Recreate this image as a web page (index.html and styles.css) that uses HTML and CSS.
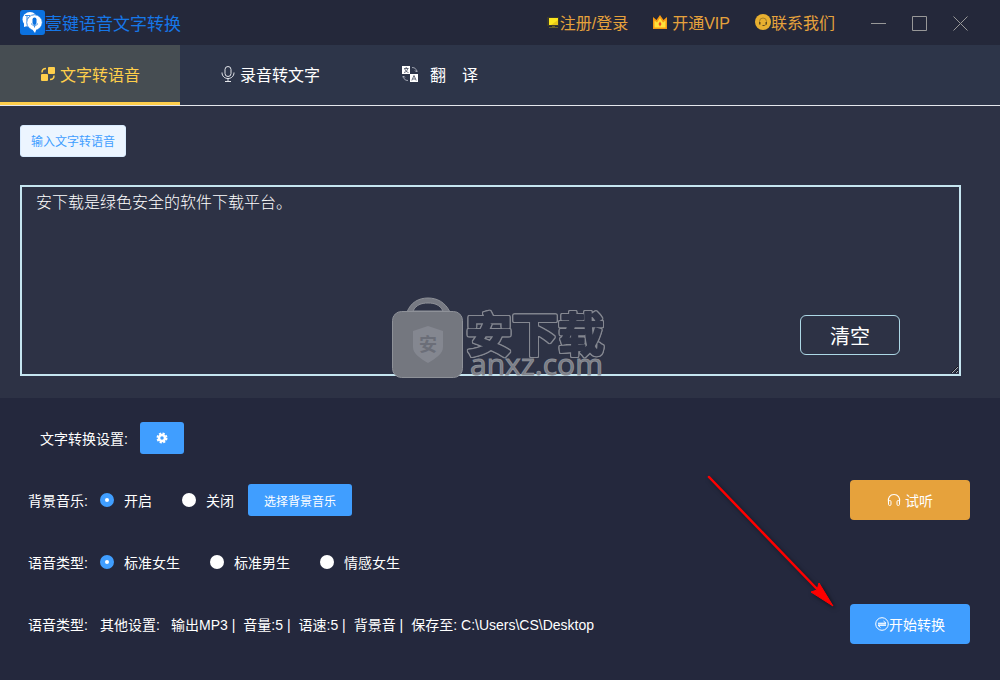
FILE: index.html
```
<!DOCTYPE html>
<html lang="zh-CN">
<head>
    <meta charset="UTF-8">
    <meta name="viewport" content="width=device-width, initial-scale=1.0">
    <title>壹键语音文字转换</title>
    <link rel="stylesheet" href="styles.css">
</head>
<body>
    <header class="header">
        <div class="logo">
            <svg width="25" height="25" viewBox="0 0 25 25">
                <rect width="25" height="25" rx="3" fill="#0b72e0"/>
                <circle cx="10" cy="9.500" r="7.500" fill="#fff"/>
                <path d="M4 13v4l5-1.500z" fill="#fff"/>
                <path d="M5 5.500h5M7 5.500v5" fill="none" stroke="#0b72e0" stroke-width=".8"/>
                <circle cx="14.500" cy="12.500" r="7.800" fill="#fff" stroke="#0b72e0" stroke-width=".8"/>
                <path d="M12 19l3 4 1.500-4z" fill="#fff"/>
                <rect x="12.500" y="7.500" width="4" height="7.500" rx="2" fill="#0b72e0"/>
                <path d="M11.500 13.500c.5 3 5.500 3 6 0M14.500 15.500v2" fill="none" stroke="#0b72e0" stroke-width=".8"/>
            </svg>
            <span>壹键语音文字转换</span>
        </div>
        <div class="header-links">
            <a href="#login">
                <svg width="14" height="14" viewBox="0 0 14 14">
                    <path d="M1 2h12v9H1z" fill="#3b392b"/>
                    <path d="M3 3h9v7H3z" fill="#fbe61e"/>
                    <path d="M12 5v5H5z" fill="#e6c619"/>
                    <path d="M6 11h3v1H6zM3 12h9v1H3z" fill="#66602c"/>
                </svg>
                <span>注册/登录</span>
            </a>
            <a href="#vip" class="vip">
                <svg width="14" height="14" viewBox="0 0 14 14">
                    <path d="M0 2l3.500 3L7 0l3.500 5L14 2v12H0z" fill="#f79a12"/>
                    <path d="M1.500 5.500l2.500 2L7 3l3 4.500 2.500-2v7h-11z" fill="#ffe13c"/>
                    <path d="M7 6.500L8.500 9 7 11.500 5.500 9z" fill="#ef4b1f"/>
                </svg>
                <span>开通VIP</span>
            </a>
            <a href="#contact">
                <svg width="16" height="16" viewBox="0 0 16 16">
                    <circle cx="8" cy="8" r="8" fill="#e8b030"/>
                    <path d="M4.500 9V7.500a3.500 3.500 0 0 1 7 0V9c0 1.500-1 2.500-3 2.500" fill="none" stroke="#8a6a22" stroke-width=".7"/>
                    <path d="M4 8h1.500v2.500H4zM10.500 8H12v2.500h-1.500zM7.500 11h2v1h-2z" fill="#5f4a1f"/>
                </svg>
                <span>联系我们</span>
            </a>
        </div>
        <div class="window-buttons">
            <button type="button" aria-label="最小化">
                <svg width="15" height="15" viewBox="0 0 15 15"><path d="M0 7.500h15"/></svg>
            </button>
            <button type="button" aria-label="最大化">
                <svg width="15" height="15" viewBox="0 0 15 15"><path d="M.5.5h14v14H.5z"/></svg>
            </button>
            <button type="button" aria-label="关闭">
                <svg width="15" height="15" viewBox="0 0 15 15"><path d="M.5.500l14 14M14.500.5l-14 14"/></svg>
            </button>
        </div>
    </header>

    <nav class="tabs">
        <a href="#tts" class="tab active">
            <svg width="16" height="16" viewBox="0 0 16 16" fill="#ffcf4b">
                <rect x="8" y="1" width="7" height="7" rx="1"/>
                <rect x="1" y="8" width="7" height="7" rx="1"/>
                <path d="M2 6.500C2 4 3 2.500 6 2.500M14 9.500c0 2.500-1 4-4 4" fill="none" stroke="#ffcf4b" stroke-width="1.500"/>
            </svg>
            <span>文字转语音</span>
        </a>
        <a href="#record" class="tab">
            <svg width="16" height="16" viewBox="0 0 16 16" fill="none" stroke="#e3e5ea">
                <rect x="5" y=".5" width="6" height="10" rx="3"/>
                <path d="M2 6.500c0 8 12 8 12 0M8 12.500v3M5 15.500h6"/>
            </svg>
            <span>录音转文字</span>
        </a>
        <a href="#translate" class="tab tab-translate">
            <svg width="16" height="16" viewBox="0 0 16 16">
                <path d="M0 0h8v8H0zM8 8h8v8H8z" fill="#fff"/>
                <path d="M2 2.500h4.500M4.200 1v1.500M5.800 2.500C5 5 4 6 2 6.500M2.800 3c.7 2 1.700 3 3.700 3.500M9.800 14.500L12 9.500l2.200 5M10.700 13h2.600" fill="none" stroke="#2d3448" stroke-width=".7"/>
                <path d="M10 1.500c3 0 4.500 1.500 4.500 4M13 4.500L14.500 6 16 4.500M1.500 10c0 3 1.500 4.500 4.500 4.500M0 11.500L1.500 10 3 11.500" fill="none" stroke="#b9bdc8" stroke-width=".8"/>
            </svg>
            <span>翻&emsp;译</span>
        </a>
    </nav>

    <main>
        <section class="editor">
            <button type="button" class="btn-plain">输入文字转语音</button>
            <div class="text-box">
                <textarea aria-label="输入文字">安下载是绿色安全的软件下载平台。</textarea>
                <svg class="watermark" width="216" height="84" viewBox="0 0 216 84" aria-hidden="true">
                    <path d="M15 15C19 5 27 1 36 1s17 4 22 14z" fill="#777a83" stroke="#8e9198"/>
                    <path d="M21 14c3-6 8-8 15-8s12 2 15 8z" fill="#2d3245" stroke="#8e9198"/>
                    <rect x="0.500" y="14.500" width="70" height="66" rx="9" fill="#74777f" stroke="#8e9198"/>
                    <path d="M36 29l15 5v16c0 7-7 11-15 16-8-5-15-9-15-16V34z" fill="#848790"/>
                    <text x="27" y="54" class="mark-small">安</text>
                    <text x="74" y="54" class="mark-title">安下载</text>
                    <text x="78" y="78" class="mark-site">anxz.com</text>
                </svg>
                <button type="button" class="btn-clear">清空</button>
            </div>
        </section>

        <section class="settings">
            <div class="row row-config">
                <span>文字转换设置:</span>
                <button type="button" class="btn btn-gear" aria-label="设置">
                    <svg width="12" height="12" viewBox="0 0 12 12">
                        <circle cx="6" cy="6" r="3" fill="none" stroke="#fff" stroke-width="2.500"/>
                        <circle cx="6" cy="6" r="4.600" fill="none" stroke="#fff" stroke-width="1.800" stroke-dasharray="2.200 1.413"/>
                    </svg>
                </button>
            </div>
            <div class="row">
                <span class="row-label">背景音乐:</span>
                <label class="radio"><input type="radio" name="music" checked>开启</label>
                <label class="radio"><input type="radio" name="music">关闭</label>
                <button type="button" class="btn btn-music">选择背景音乐</button>
                <button type="button" class="btn btn-large btn-listen">
                    <svg width="14" height="14" viewBox="0 0 14 14" fill="none" stroke="#fff">
                        <path d="M1.500 9C.5 5 3 1.500 7 1.500S13.500 5 12.500 9" stroke-width="1.200"/>
                        <rect x="1.500" y="7.500" width="2.500" height="5" rx="1.200"/>
                        <rect x="10" y="7.500" width="2.500" height="5" rx="1.200"/>
                    </svg>
                    <span>试听</span>
                </button>
            </div>
            <div class="row">
                <span class="row-label">语音类型:</span>
                <label class="radio"><input type="radio" name="voice" checked>标准女生</label>
                <label class="radio"><input type="radio" name="voice">标准男生</label>
                <label class="radio"><input type="radio" name="voice">情感女生</label>
            </div>
            <div class="row">
                <span class="row-label">语音类型:</span>
                <span class="row-other">其他设置:</span>
                <div class="summary">
                    <span>输出MP3 |</span>
                    <span>音量:5 |</span>
                    <span>语速:5 |</span>
                    <span>背景音 |</span>
                    <span>保存至: C:\Users\CS\Desktop</span>
                </div>
                <button type="button" class="btn btn-large">
                    <svg width="14" height="14" viewBox="0 0 14 14">
                        <circle cx="7" cy="7" r="6.300" fill="none" stroke="#fff"/>
                        <path d="M3 6.200h8L8.500 4M11 8.300H3L5.500 10.500" fill="none" stroke="#fff"/>
                        <path d="M3 6h8v2.500H3z" fill="#fff" opacity=".5"/>
                    </svg>
                    <span>开始转换</span>
                </button>
            </div>
            <svg class="arrow" width="134" height="138" viewBox="0 0 134 138" aria-hidden="true">
                <path d="M3 4l108 112" stroke="#fe0000" stroke-width="2.500" stroke-linecap="round"/>
                <path d="M127 133l-22-14 6-2 2-7z" fill="#fe0000" stroke="#fe0000"/>
            </svg>
        </section>
    </main>
</body>
</html>
```
FILE: styles.css
```
* {
    box-sizing: border-box;
}
body {
    margin: 0;
    min-height: 100vh;
    display: flex;
    flex-direction: column;
    background: #24283d;
    color: #fff;
    font-family: "Liberation Sans", "Noto Sans CJK SC", sans-serif;
    font-size: 14px;
}
a {
    color: inherit;
    text-decoration: none;
}
button {
    font-family: inherit;
    cursor: pointer;
}
svg {
    flex-shrink: 0;
}
.header {
    display: flex;
    align-items: center;
    height: 45px;
    padding: 0 32px 0 20px;
    background: #24283a;
}
.logo {
    display: flex;
    align-items: center;
    color: #1677e8;
    font-size: 17px;
}
.header-links {
    display: flex;
    gap: 25px;
    margin-left: auto;
    padding-bottom: 2px;
    color: #e6a23c;
    font-size: 16px;
}
.header-links a {
    display: flex;
    align-items: center;
}
.header-links .vip {
    gap: 5px;
}
.window-buttons {
    display: flex;
    gap: 26px;
    margin-left: 36px;
    padding-top: 2px;
}
.window-buttons button {
    display: flex;
    padding: 0;
    border: 0;
    background: none;
}
.window-buttons svg {
    fill: none;
    stroke: #989898;
}
.tabs {
    display: flex;
    height: 61px;
    border-bottom: 1px solid #e4e7ed;
    background: #2d3549;
}
.tab {
    display: flex;
    align-items: center;
    justify-content: center;
    gap: 4px;
    width: 180px;
    border-bottom: 3px solid transparent;
    font-size: 16px;
}
.tab.active {
    background: #464d52;
    border-bottom-color: #ffcf4b;
    color: #ffcf4b;
}
.tab-translate {
    gap: 12px;
    width: 160px;
}
.editor {
    padding: 19px 39px 22px 20px;
    background: #2d3245;
}
.btn-plain {
    display: block;
    height: 32px;
    padding: 0 10px 2px;
    border: 1px solid #d9ecff;
    border-radius: 3px;
    background: #ecf5ff;
    color: #409eff;
    font-size: 12px;
}
.text-box {
    position: relative;
    margin-top: 28px;
}
.text-box textarea {
    display: block;
    width: 100%;
    height: 191px;
    padding: 4px 14px;
    border: 2px solid #c5e5f0;
    outline: none;
    background: transparent;
    color: #fff;
    font-family: inherit;
    font-size: 16px;
    font-weight: 300;
    line-height: 24px;
}
.watermark {
    position: absolute;
    left: 372px;
    bottom: -5px;
    pointer-events: none;
}
.mark-small {
    fill: #6b6e78;
    font-size: 18px;
    font-weight: 700;
}
.mark-title {
    fill: #2d3245;
    stroke: #2d3245;
    stroke-width: 2px;
    stroke-linejoin: round;
    font-size: 46px;
    font-weight: 700;
    filter: drop-shadow(1px 0 0 #858891) drop-shadow(-1px 0 0 #858891) drop-shadow(0 1px 0 #858891) drop-shadow(0 -1px 0 #858891);
}
.mark-site {
    fill: #777a83;
    stroke: #8b8e96;
    stroke-width: 1px;
    font-family: "Open Sans", sans-serif;
    font-size: 30px;
}
.btn-clear {
    position: absolute;
    right: 61px;
    bottom: 21px;
    width: 100px;
    height: 40px;
    border: 1px solid #add8e6;
    border-radius: 6px;
    background: #2d3245;
    color: #fff;
    font-size: 20px;
}
.settings {
    position: relative;
    padding: 9px 30px 24px 28px;
}
.row {
    display: flex;
    align-items: center;
    height: 62px;
}
.row-config {
    gap: 12px;
    padding-left: 12px;
}
.row-label {
    width: 72px;
}
.row-other {
    width: 71px;
}
.radio {
    display: flex;
    align-items: center;
    gap: 10px;
    margin-right: 30px;
}
.radio input {
    appearance: none;
    width: 14px;
    height: 14px;
    margin: 0;
    border-radius: 50%;
    background: #fff;
}
.radio input:checked {
    border: 5px solid #409eff;
}
.radio:has(+ .btn-music) {
    margin-right: 14px;
}
.summary {
    display: flex;
    gap: 8px;
}
.btn {
    display: flex;
    align-items: center;
    justify-content: center;
    height: 32px;
    padding: 0 16px;
    border: 0;
    border-radius: 3px;
    background: #409eff;
    color: #fff;
    font-size: 12px;
}
.btn-large {
    width: 120px;
    height: 40px;
    margin-left: auto;
    border-radius: 4px;
    font-size: 14px;
}
.btn-listen {
    gap: 4px;
    background: #e6a23c;
}
.arrow {
    position: absolute;
    right: 160px;
    top: 75px;
    filter: drop-shadow(2px 2px 2px rgba(0, 0, 0, 0.5));
    pointer-events: none;
}
```
